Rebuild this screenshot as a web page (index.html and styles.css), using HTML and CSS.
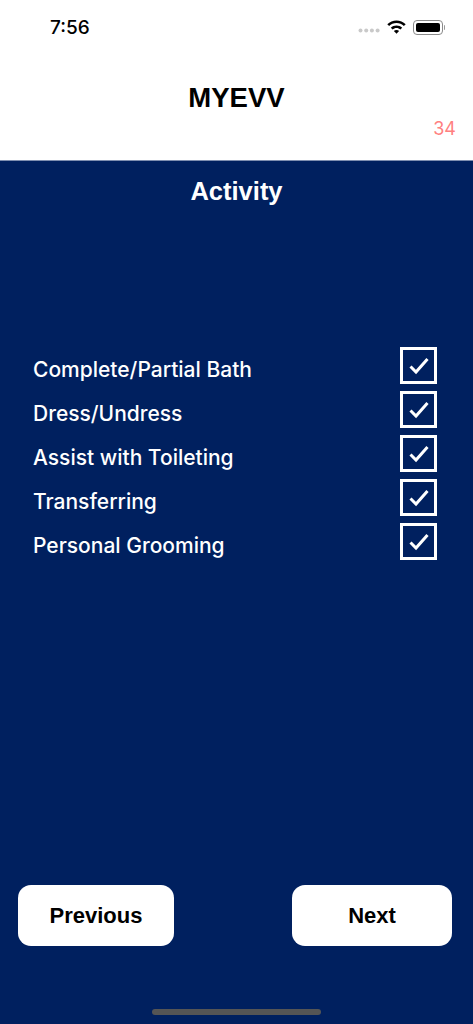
FILE: index.html
```html
<!DOCTYPE html>
<html lang="en">
<head>
<meta charset="utf-8">
<title>MYEVV</title>
<link rel="stylesheet" href="styles.css">
</head>
<body>
<div class="screen">
  <header class="top">
    <div class="status">
      <span class="time">7:56</span>
      <div class="status-icons">
        <svg class="dots" width="22" height="5" viewBox="0 0 22 5"><g fill="#c9c9c9"><circle cx="2.5" cy="2.5" r="2"/><circle cx="8.2" cy="2.5" r="2"/><circle cx="13.9" cy="2.5" r="2"/><circle cx="19.6" cy="2.5" r="2"/></g></svg>
        <svg class="wifi" width="19" height="15" viewBox="0 0 19 15"><path d="M9.5 1.500c3.500 0 6.800 1.400 9.200 3.700l-1.800 1.900C15 5.200 12.400 4.100 9.500 4.100S4 5.200 2.100 7.100L.3 5.200C2.700 2.900 6 1.500 9.500 1.500z"/><path d="M9.500 6.400c2.200 0 4.200.9 5.700 2.300l-1.800 1.900c-1-1-2.400-1.600-3.900-1.600s-2.900.6-3.900 1.600L3.800 8.700C5.300 7.300 7.300 6.400 9.500 6.400z"/><path d="M9.500 10.900c1 0 1.900.4 2.600 1L9.500 14.800 6.900 11.900c.7-.6 1.600-1 2.600-1z"/></svg>
        <div class="battery"><span class="battery-fill"></span></div>
      </div>
    </div>
    <h1 class="brand">MYEVV</h1>
    <div class="counter">34</div>
  </header>
  <main class="panel">
    <h2 class="title">Activity</h2>
    <ul class="list">
      <li class="row"><span class="label">Complete/Partial Bath</span><span class="box"><svg width="22" height="20" viewBox="0 0 22 20"><path class="tick" d="M2.500 10.500l5.500 5.500L19.500 3"/></svg></span></li>
      <li class="row"><span class="label">Dress/Undress</span><span class="box"><svg width="22" height="20" viewBox="0 0 22 20"><path class="tick" d="M2.500 10.500l5.500 5.500L19.500 3"/></svg></span></li>
      <li class="row"><span class="label">Assist with Toileting</span><span class="box"><svg width="22" height="20" viewBox="0 0 22 20"><path class="tick" d="M2.500 10.500l5.500 5.500L19.500 3"/></svg></span></li>
      <li class="row"><span class="label">Transferring</span><span class="box"><svg width="22" height="20" viewBox="0 0 22 20"><path class="tick" d="M2.500 10.500l5.500 5.500L19.500 3"/></svg></span></li>
      <li class="row"><span class="label">Personal Grooming</span><span class="box"><svg width="22" height="20" viewBox="0 0 22 20"><path class="tick" d="M2.500 10.500l5.500 5.500L19.500 3"/></svg></span></li>
    </ul>
    <div class="actions">
      <button class="btn btn-prev" type="button">Previous</button>
      <button class="btn btn-next" type="button">Next</button>
    </div>
    <div class="home-bar"></div>
  </main>
</div>
</body>
</html>
```
FILE: styles.css
```css
* { box-sizing: border-box; }
html, body { margin: 0; padding: 0; }
body { width: 473px; height: 1024px; overflow: hidden; background: #00205f; }
.screen { width: 473px; height: 1024px; display: flex; flex-direction: column; }
.top { height: 161px; background: #fff; border-bottom: 1px solid #7f8fb0; padding: 0 17px 0 50px; display: flex; flex-direction: column; }
.status { height: 54px; display: flex; justify-content: space-between; align-items: center; }
.time { font: 500 19px/1 Inter, sans-serif; color: #000; }
.status-icons { display: flex; align-items: center; gap: 7px; padding-right: 13px; }
.dots { margin-top: 6px; }
.wifi { margin-top: -1px; }
.battery { width: 30px; height: 15px; border: 1px solid #8a8a8a; border-radius: 4px; padding: 2px; position: relative; }
.battery::after { content: ""; position: absolute; right: -3px; top: 4px; width: 1.500px; height: 5px; background: #999; border-radius: 0 1px 1px 0; }
.battery-fill { display: block; width: 100%; height: 100%; background: #000; border-radius: 2px; }
.brand { margin: 27px 0 0 -33px; font: 700 27.500px/34px "Liberation Sans", sans-serif; text-align: center; color: #000; }
.counter { margin-top: 2px; text-align: right; font: 400 18px/24px Inter, sans-serif; color: #ff8080; }
.panel { flex: 1; background: #00205f; display: flex; flex-direction: column; }
.title { margin: 15px 0 0; font: 700 25.500px/30px "Liberation Sans", sans-serif; text-align: center; color: #fff; }
.list { list-style: none; margin: 141px 0 0; padding: 0 36px 0 33px; display: flex; flex-direction: column; gap: 7px; }
.row { height: 37px; display: flex; justify-content: space-between; align-items: flex-start; }
.label { font: 500 21px/28px Inter, sans-serif; color: #fff; margin-top: 9px; }
.box { width: 37px; height: 37px; border: 3px solid #fff; display: flex; align-items: center; justify-content: center; }
.tick { fill: none; stroke: #fff; stroke-width: 3; }
.actions { margin-top: auto; padding: 0 21px 0 18px; display: flex; justify-content: space-between; }
.btn { height: 61px; background: #fff; border: 0; border-radius: 13px; font: 700 22px/1 "Liberation Sans", sans-serif; color: #000; padding: 0; }
.btn-prev { width: 156px; }
.btn-next { width: 160px; }
.home-bar { width: 169px; height: 6px; margin: 63px auto 9px; background: #555; border-radius: 3px; }
```
